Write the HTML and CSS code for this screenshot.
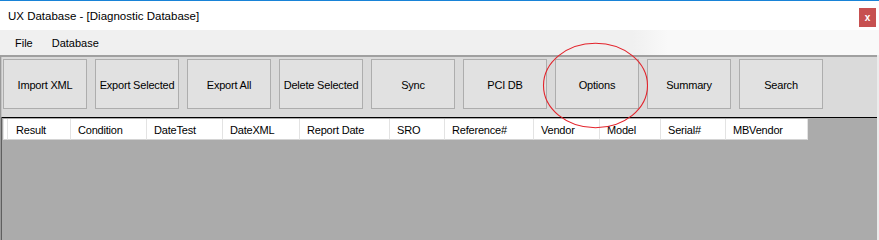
FILE: index.html
```html
<!DOCTYPE html>
<html>
<head>
<meta charset="utf-8">
<link rel="stylesheet" href="styles.css">
</head>
<body>
<div class="window">
  <div class="titlebar">
    <span class="title">UX Database - [Diagnostic Database]</span>
    <span class="close">x</span>
  </div>
  <div class="menubar">
    <span class="menu-item">File</span>
    <span class="menu-item">Database</span>
  </div>
  <div class="client">
    <div class="toolbar">
      <div class="btn">Import XML</div>
      <div class="btn">Export Selected</div>
      <div class="btn">Export All</div>
      <div class="btn">Delete Selected</div>
      <div class="btn">Sync</div>
      <div class="btn">PCI DB</div>
      <div class="btn">Options</div>
      <div class="btn">Summary</div>
      <div class="btn">Search</div>
    </div>
    <div class="grid">
      <div class="header">
        <div class="cell rowhdr"></div>
        <div class="cell c-result">Result</div>
        <div class="cell c-condition">Condition</div>
        <div class="cell c-datetest">DateTest</div>
        <div class="cell c-datexml">DateXML</div>
        <div class="cell c-report">Report Date</div>
        <div class="cell c-sro">SRO</div>
        <div class="cell c-ref">Reference#</div>
        <div class="cell c-vendor">Vendor</div>
        <div class="cell c-model">Model</div>
        <div class="cell c-serial">Serial#</div>
        <div class="cell c-mbvendor">MBVendor</div>
      </div>
    </div>
  </div>
  <svg class="highlight" width="879" height="240" viewBox="0 0 879 240">
    <ellipse cx="595.5" cy="85.5" rx="52" ry="42.2" fill="none" stroke="#e3232b" stroke-width="1.1"/>
  </svg>
</div>
</body>
</html>
```
FILE: styles.css
```css
* { box-sizing: border-box; }
html, body { margin: 0; padding: 0; }
body {
  width: 879px;
  height: 240px;
  overflow: hidden;
  background: #ececec;
  font-family: "Liberation Sans", Arial, sans-serif;
  color: #000;
}
.window {
  position: relative;
  width: 879px;
  height: 240px;
  display: flex;
  flex-direction: column;
}
.titlebar {
  height: 30px;
  border-top: 1px solid #1883d7;
  background: #fff;
  display: flex;
  align-items: center;
  padding-left: 8px;
  flex: none;
}
.title {
  font-size: 11.5px;
  flex: 1;
  margin-top: 1px;
}
.close {
  align-self: flex-start;
  margin-top: 7px;
  margin-right: 3px;
  width: 17px;
  height: 19px;
  background: #c75050;
  color: #fff;
  font-weight: bold;
  font-size: 10px;
  display: flex;
  align-items: center;
  justify-content: center;
  padding-bottom: 1px;
}
.menubar {
  height: 25px;
  flex: none;
  background: linear-gradient(to right, #f0f0f0 0%, #f0f0f0 72%, #f9f9f9 76%, #f9f9f9 100%);
  display: flex;
  align-items: center;
  gap: 19px;
  padding-left: 15px;
  font-size: 11px;
  padding-top: 1px;
}
.client {
  flex: 1;
  width: 877px;
  display: flex;
  flex-direction: column;
  border-top: 2px solid #a0a0a0;
  border-left: 1px solid #9a9a9a;
  min-height: 0;
}
.toolbar {
  flex: none;
  height: 61px;
  background: #dadada;
  border-left: 1px solid #c4c4c4;
  border-bottom: 1px solid #000;
  display: flex;
  gap: 8px;
  padding-top: 2px;
  padding-left: 1px;
}
.btn {
  width: 84px;
  height: 50px;
  background: #e1e1e1;
  border: 1px solid #adadad;
  display: flex;
  align-items: center;
  justify-content: center;
  font-size: 11px;
  letter-spacing: -0.2px;
  padding-top: 1px;
}
.grid {
  flex: 1;
  background: #ababab;
  border-left: 1px solid #5f5f5f;
  min-height: 0;
}
.header {
  display: flex;
  height: 22px;
  padding-top: 1px;
}
.cell {
  background: #fff;
  height: 21px;
  border-right: 1px solid #e3e3e3;
  border-bottom: 1px solid #d4d4d4;
  font-size: 11px;
  letter-spacing: -0.2px;
  padding-left: 7px;
  display: flex;
  align-items: center;
  padding-top: 1px;
  white-space: nowrap;
}
.rowhdr { width: 5px; padding: 0; border-left: 1px solid #e3e3e3; margin-left: 1px; }
.c-result { width: 63px; padding-left: 8px; }
.c-condition { width: 76px; }
.c-datetest { width: 76px; }
.c-datexml { width: 77px; }
.c-report { width: 90px; }
.c-sro { width: 55px; }
.c-ref { width: 89px; }
.c-vendor { width: 66px; }
.c-model { width: 61px; }
.c-serial { width: 65px; }
.c-mbvendor { width: 82px; }
.highlight {
  position: absolute;
  left: 0;
  top: 0;
  pointer-events: none;
}
```
